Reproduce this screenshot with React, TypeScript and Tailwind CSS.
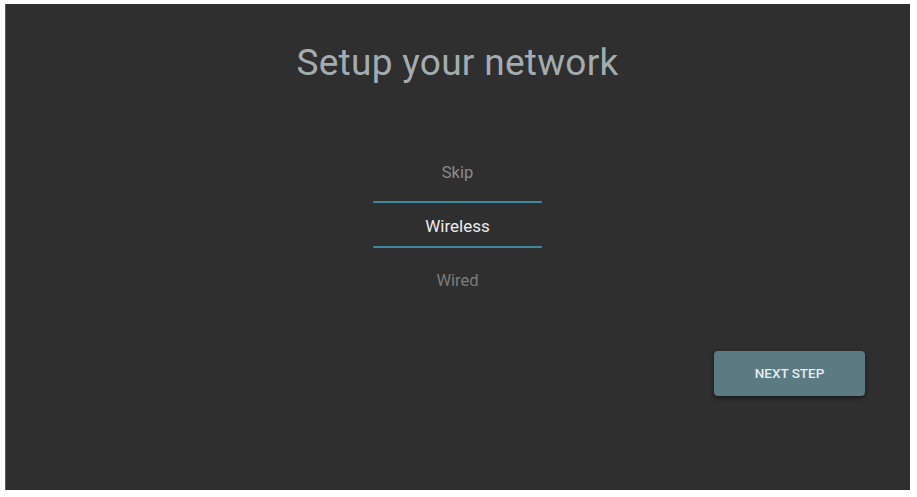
export default function App() {
  return (
    <div className="h-[497px] w-[917px] bg-white pl-[5px] pt-[4px] font-['Roboto',sans-serif]">
      <div className="relative flex h-[486px] w-[905px] flex-col items-center bg-[#2f2f2f] shadow-[inset_1px_0_0_#5a5a5a]">
        <h1 className="mt-[37px] text-[37px] font-normal leading-[44px] tracking-[0.3px] text-[#a3adb1]">
          Setup your network
        </h1>

        <div className="mt-[69px] flex w-[169px] flex-col items-center">
          <div className="flex h-[38px] items-center text-[16.5px] text-[#8b8b8b]">Skip</div>
          <div className="mt-[9px] h-[2px] w-full rounded-full bg-[#3d8aa0]" />
          <div className="flex h-[43px] w-full items-center justify-center pt-[4px] text-[17px] text-[#ececec]">Wireless</div>
          <div className="h-[2px] w-full rounded-full bg-[#3d8aa0]" />
          <div className="mt-[14px] flex h-[38px] items-center text-[16.5px] text-[#7c7c7c]">Wired</div>
        </div>

        <div className="flex w-full justify-end pr-[45px] pt-[51px]">
          <button className="flex h-[45px] w-[151px] items-center justify-center rounded-[4px] bg-[#5b7a81] text-[13.5px] font-medium text-[#e6eef0] shadow-[0_2px_4px_rgba(0,0,0,0.5)]">
            NEXT STEP
          </button>
        </div>
      </div>
    </div>
  );
}
